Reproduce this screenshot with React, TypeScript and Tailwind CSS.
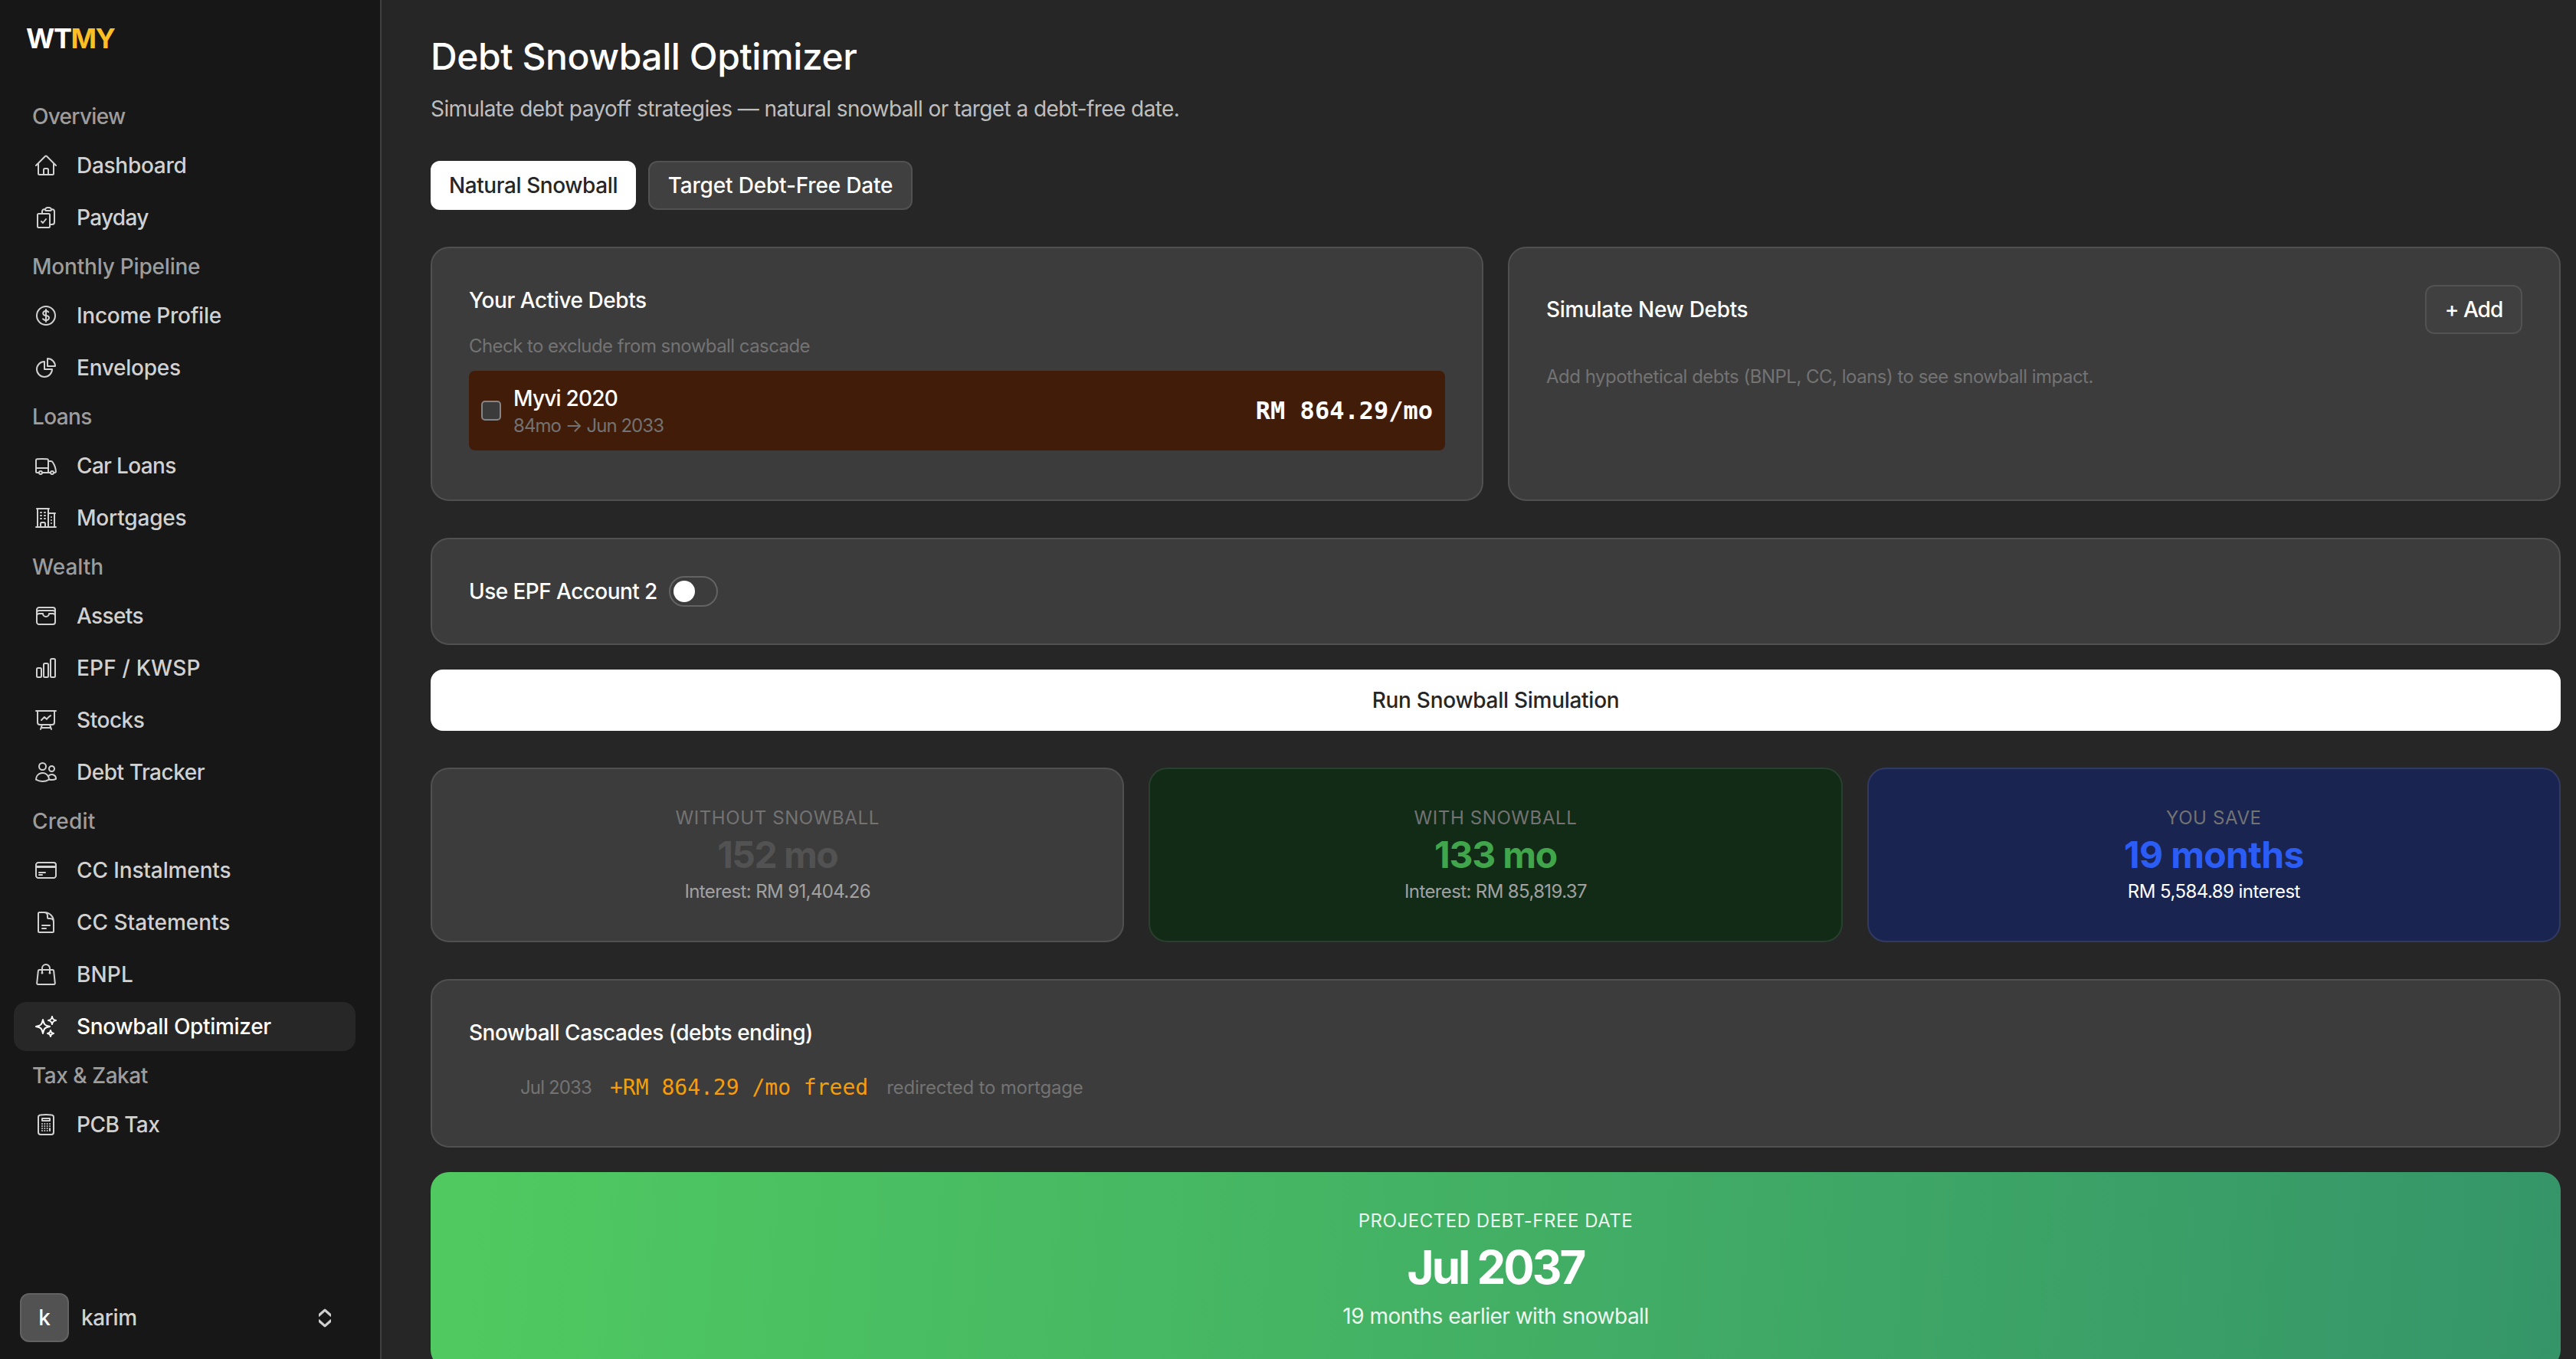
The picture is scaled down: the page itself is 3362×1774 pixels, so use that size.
import { useState } from "react";
import type { ReactNode } from "react";
import type { IconType } from "react-icons";
import {
  HiOutlineBuildingOffice2,
  HiOutlineCalculator,
  HiOutlineChartBar,
  HiOutlineChartPie,
  HiOutlineClipboardDocumentCheck,
  HiOutlineCreditCard,
  HiOutlineCurrencyDollar,
  HiOutlineDocumentText,
  HiOutlineHome,
  HiOutlinePresentationChartLine,
  HiOutlineShoppingBag,
  HiOutlineSparkles,
  HiOutlineTruck,
  HiOutlineUsers,
  HiOutlineWallet,
} from "react-icons/hi2";

interface NavItem {
  label: string;
  icon: IconType;
  tracking: string;
}

interface NavGroup {
  heading: string;
  tracking: string;
  items: NavItem[];
}

const navGroups: NavGroup[] = [
  {
    heading: "Overview",
    tracking: "tracking-[-0.025em]",
    items: [
      { label: "Dashboard", icon: HiOutlineHome, tracking: "tracking-[-0.01em]" },
      { label: "Payday", icon: HiOutlineClipboardDocumentCheck, tracking: "tracking-[-0.0245em]" },
    ],
  },
  {
    heading: "Monthly Pipeline",
    tracking: "tracking-[-0.0075em]",
    items: [
      { label: "Income Profile", icon: HiOutlineCurrencyDollar, tracking: "tracking-[-0.01em]" },
      { label: "Envelopes", icon: HiOutlineChartPie, tracking: "tracking-[-0.009em]" },
    ],
  },
  {
    heading: "Loans",
    tracking: "tracking-[-0.0225em]",
    items: [
      { label: "Car Loans", icon: HiOutlineTruck, tracking: "tracking-[-0.0235em]" },
      { label: "Mortgages", icon: HiOutlineBuildingOffice2, tracking: "tracking-[-0.0065em]" },
    ],
  },
  {
    heading: "Wealth",
    tracking: "tracking-normal",
    items: [
      { label: "Assets", icon: HiOutlineWallet, tracking: "tracking-[-0.0225em]" },
      { label: "EPF / KWSP", icon: HiOutlineChartBar, tracking: "tracking-[0.006em]" },
      { label: "Stocks", icon: HiOutlinePresentationChartLine, tracking: "tracking-[-0.016em]" },
      { label: "Debt Tracker", icon: HiOutlineUsers, tracking: "tracking-[-0.0165em]" },
    ],
  },
  {
    heading: "Credit",
    tracking: "tracking-[0.008em]",
    items: [
      { label: "CC Instalments", icon: HiOutlineCreditCard, tracking: "tracking-[-0.0045em]" },
      { label: "CC Statements", icon: HiOutlineDocumentText, tracking: "tracking-normal" },
      { label: "BNPL", icon: HiOutlineShoppingBag, tracking: "tracking-[0.005em]" },
      { label: "Snowball Optimizer", icon: HiOutlineSparkles, tracking: "tracking-[-0.011em]" },
    ],
  },
  {
    heading: "Tax & Zakat",
    tracking: "tracking-[-0.0165em]",
    items: [{ label: "PCB Tax", icon: HiOutlineCalculator, tracking: "tracking-[-0.0195em]" }],
  },
];

function ChevronUpDown() {
  return (
    <svg className="h-[25px] w-4" viewBox="0 0 16 25" fill="none" stroke="currentColor" strokeWidth="3.2">
      <path d="M-0.5 9.7 8 2.1l8.5 7.6M-0.5 15.3 8 22.9l8.5-7.6" strokeLinejoin="round" />
    </svg>
  );
}

function Sidebar({ active }: { active: string }) {
  return (
    <aside className="flex w-[498px] shrink-0 flex-col border-r-2 border-[#404040] bg-[#171717] pt-5 pr-8 pb-[22px] pl-[18px] font-medium">
      <div className="pl-4 text-4xl leading-[60px] font-bold tracking-[-0.04em] text-white">
        WT<span className="text-[#fbbf24]">MY</span>
      </div>

      <nav className="mt-10 flex flex-col text-[28px]">
        {navGroups.map((group) => (
          <div key={group.heading}>
            <div className={`pl-6 leading-[64px] text-[#9d9d9d] ${group.tracking}`}>{group.heading}</div>
            <div className="flex flex-col gap-1">
              {group.items.map(({ label, icon: Icon, tracking }) => (
                <a
                  key={label}
                  className={`flex h-16 items-center gap-6 rounded-2xl pl-[26px] ${
                    label === active ? "bg-[#272727] text-white" : "text-[#d1d1d1]"
                  }`}
                >
                  <Icon className="size-8" />
                  <span className={tracking}>{label}</span>
                </a>
              ))}
            </div>
          </div>
        ))}
      </nav>

      <button className="mt-auto flex items-center pr-8 pl-2 text-left text-[28px]">
        <span className="flex size-16 items-center justify-center rounded-xl border-2 border-[#626262] bg-[#525252] text-white">
          k
        </span>
        <span className="ml-4 grow tracking-[-0.014em] text-[#d1d1d1]">karim</span>
        <span className="text-[#cfcfcf]">
          <ChevronUpDown />
        </span>
      </button>
    </aside>
  );
}

function Card({ className = "", children }: { className?: string; children: ReactNode }) {
  return (
    <div className={`rounded-3xl border-2 p-12 ${className || "border-[#505050] bg-[#3c3c3c]"}`}>{children}</div>
  );
}

interface StatProps {
  label: string;
  value: string;
  note: string;
  card?: string;
  valueClass: string;
  noteClass: string;
}

function Stat({ label, value, note, card, valueClass, noteClass }: StatProps) {
  return (
    <Card className={card}>
      <div className="text-center">
        <div className="text-2xl leading-8 tracking-[0.025em] text-[#737373] uppercase">{label}</div>
        <div className={`text-5xl leading-[64px] font-bold ${valueClass}`}>{value}</div>
        <div className={`text-2xl leading-8 ${noteClass}`}>{note}</div>
      </div>
    </Card>
  );
}

export default function App() {
  const [mode, setMode] = useState<"natural" | "target">("natural");
  const [excluded, setExcluded] = useState(false);
  const [useEpf, setUseEpf] = useState(false);

  const modeClass = (selected: boolean) =>
    selected ? "border-white bg-white text-[#262626]" : "border-[#525252] bg-[#404040] text-white";

  return (
    <div className="flex h-screen overflow-hidden bg-[#262626] font-['Inter','Liberation_Sans',sans-serif] text-white">
      <Sidebar active="Snowball Optimizer" />

      <main className="min-w-0 grow overflow-hidden pt-11 pr-5 pl-16">
        {/* Header */}
        <h1 className="text-5xl leading-[60px] font-medium tracking-[-0.009em]">Debt Snowball Optimizer</h1>
        <p className="mt-[18px] text-[28px] leading-10 tracking-[-0.021em] text-[#bebebe]">
          Simulate debt payoff strategies — natural snowball or target a debt-free date.
        </p>

        {/* Mode switch */}
        <div className="mt-12 flex gap-4 text-[28px] font-medium">
          <button
            onClick={() => setMode("natural")}
            className={`h-16 w-[268px] rounded-xl border-2 tracking-[-0.015em] ${modeClass(mode === "natural")}`}
          >
            Natural Snowball
          </button>
          <button
            onClick={() => setMode("target")}
            className={`h-16 w-[345px] rounded-xl border-2 tracking-[-0.0065em] ${modeClass(mode === "target")}`}
          >
            Target Debt-Free Date
          </button>
        </div>

        {/* Debts */}
        <div className="mt-12 grid grid-cols-2 gap-8">
          <Card>
            <h2 className="text-[28px] leading-10 font-medium tracking-[-0.016em]">Your Active Debts</h2>
            <p className="mt-6 text-2xl leading-8 tracking-[-0.0234em] text-[#737373]">
              Check to exclude from snowball cascade
            </p>
            <div className="mt-4 mb-4 flex items-center rounded-lg bg-[#411c08] p-4">
              <button
                role="checkbox"
                aria-checked={excluded}
                onClick={() => setExcluded(!excluded)}
                className="size-[26px] rounded-[5px] border-2 border-[#858585] bg-[#3b3b3b]"
              />
              <div className="ml-4 grow">
                <div className="text-[28px] leading-10 font-medium tracking-[-0.028em]">Myvi 2020</div>
                <div className="text-2xl leading-8 tracking-[-0.04em] text-[#737373]">84mo → Jun 2033</div>
              </div>
              <span className="font-['DejaVu_Sans_Mono',monospace] text-[32px] font-bold">RM 864.29/mo</span>
            </div>
          </Card>

          <Card>
            <div className="flex items-center justify-between font-medium">
              <h2 className="text-[28px] tracking-[-0.0115em]">Simulate New Debts</h2>
              <button className="h-16 w-[127px] rounded-xl border-2 border-[#525252] bg-[#404040] text-[28px] tracking-[-0.036em]">
                + Add
              </button>
            </div>
            <p className="mt-10 text-2xl leading-8 tracking-[-0.0212em] text-[#737373]">
              Add hypothetical debts (BNPL, CC, loans) to see snowball impact.
            </p>
          </Card>
        </div>

        {/* EPF toggle */}
        <div className="mt-12">
          <Card>
            <div className="flex items-center">
              <span className="w-[261px] text-[28px] leading-10 font-medium tracking-[-0.02em]">
                Use EPF Account 2
              </span>
              <button
                role="switch"
                aria-checked={useEpf}
                onClick={() => setUseEpf(!useEpf)}
                className={`flex h-10 w-16 items-center rounded-full border-2 border-[#636363] px-1 ${
                  useEpf ? "justify-end bg-[#525252]" : "justify-start"
                }`}
              >
                <span className="size-7 rounded-full bg-white" />
              </button>
            </div>
          </Card>
        </div>

        <button className="mt-8 h-20 w-full rounded-2xl bg-white text-[28px] font-medium tracking-[-0.01em] text-[#262626]">
          Run Snowball Simulation
        </button>

        {/* Results */}
        <div className="mt-12 grid grid-cols-3 gap-8">
          <Stat
            label="Without Snowball"
            value="152 mo"
            note="Interest: RM 91,404.26"
            valueClass="text-[#525252] tracking-[-0.032em]"
            noteClass="text-[#a1a1a1] tracking-[-0.026em]"
          />
          <Stat
            label="With Snowball"
            value="133 mo"
            note="Interest: RM 85,819.37"
            card="border-[#29402e] bg-[#122b17]"
            valueClass="text-[#40a54b] tracking-[-0.026em]"
            noteClass="text-[#a1a1a1] tracking-[-0.026em]"
          />
          <Stat
            label="You Save"
            value="19 months"
            note="RM 5,584.89 interest"
            card="border-[#313a62] bg-[#1a2450]"
            valueClass="text-[#2b5df5] tracking-[-0.014em]"
            noteClass="text-white tracking-[-0.023em]"
          />
        </div>

        {/* Cascades */}
        <div className="mt-12">
          <Card>
            <h2 className="text-[28px] leading-10 font-medium tracking-[-0.018em]">Snowball Cascades (debts ending)</h2>
            <div className="mt-6 flex items-center gap-6 py-2 text-2xl text-[#737373]">
              <span className="w-40 text-right tracking-[-0.036em]">Jul 2033</span>
              <span className="font-['DejaVu_Sans_Mono',monospace] text-[28px] leading-10 text-[#f59e0b]">
                +RM 864.29 /mo freed
              </span>
              <span className="tracking-[-0.008em]">redirected to mortgage</span>
            </div>
          </Card>
        </div>

        {/* Projection */}
        <div className="mt-8 rounded-3xl bg-linear-[95deg,#50ca60,#359569] py-12 text-center text-white">
          <div className="text-2xl leading-8 tracking-[0.022em] uppercase opacity-90">Projected Debt-Free Date</div>
          <div className="mt-2 text-6xl leading-[72px] font-bold tracking-[-0.05em]">Jul 2037</div>
          <div className="mt-2 text-[28px] leading-10 tracking-[-0.018em] opacity-90">
            19 months earlier with snowball
          </div>
        </div>
      </main>
    </div>
  );
}
